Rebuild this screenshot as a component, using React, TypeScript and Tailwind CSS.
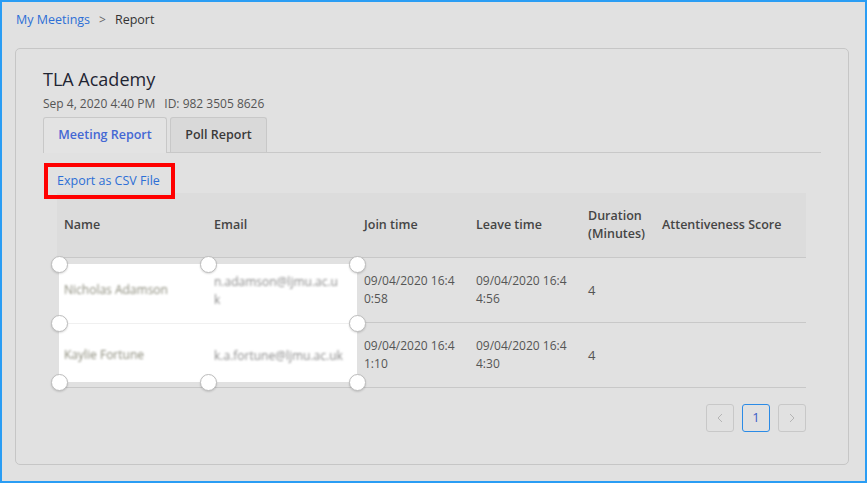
import React from "react";

const Handle = ({ className }: { className: string }) => (
  <div
    className={`absolute w-[17px] h-[17px] -ml-[8.5px] -mt-[8.5px] rounded-full bg-white border border-[#bdbdbd] shadow-[0_1px_2px_rgba(0,0,0,0.15)] ${className}`}
  />
);

const cols = "grid grid-cols-[150px_150px_112px_112px_75px_150px]";

export default function App() {
  return (
    <div
      className="w-[867px] h-[483px] border-2 border-[#2a9df4] bg-[#e1e1e1] px-[13px] overflow-hidden"
      style={{ fontFamily: '"Open Sans", "Noto Sans", sans-serif' }}
    >
      <div className="pt-[9px] pl-[1px] text-[12.5px] leading-[18px] flex items-center">
        <span className="text-[#2d6fd6]">My Meetings</span>
        <span className="text-[#666] mx-[9px] text-[12px]">&gt;</span>
        <span className="text-[#333]">Report</span>
      </div>

      <div className="mt-[19px] w-[834px] h-[417px] border border-[#c6c6c6] rounded-[5px] px-[27px] pt-[17px]">
        <div className="text-[18px] leading-[26px] text-[#1f2533]">TLA Academy</div>
        <div className="mt-[3px] text-[12px] leading-[18px] text-[#555]">
          Sep 4, 2020 4:40 PM<span className="ml-[9px]">ID: 982 3505 8626</span>
        </div>

        <div className="mt-[4px] flex items-end border-b border-[#c8c8c8] h-[36px]">
          <div className="h-[36px] w-[124px] border border-b-0 border-[#c8c8c8] rounded-t-[3px] bg-[#e3e3e3] flex items-center justify-center text-[12.5px] font-semibold text-[#4468d4] -mb-[1px] pb-[1px]">
            Meeting Report
          </div>
          <div className="ml-[3px] h-[35px] w-[97px] border border-b-0 border-[#c8c8c8] rounded-t-[3px] bg-[#d9d9d9] flex items-center justify-center text-[12.5px] font-semibold text-[#3a3a3a]">
            Poll Report
          </div>
        </div>

        <div className="mt-[10px] ml-[1px] w-[131px] h-[36px] border-[4px] border-[#ff0000] flex items-center pl-[9px] text-[12.5px] text-[#2d6fd6] relative z-10 -mb-[6px]">
          Export as CSV File
        </div>

        <div className="ml-[14px] mr-[15px] text-[12.5px]">
          <div className={`${cols} h-[65px] bg-[#dcdcdc] border-b border-[#c8c8c8] items-center font-semibold text-[#454545] leading-[18px]`}>
            <div className="pl-[7px]">Name</div>
            <div className="pl-[7px]">Email</div>
            <div className="pl-[7px]">Join time</div>
            <div className="pl-[7px]">Leave time</div>
            <div className="pl-[7px]">Duration<br />(Minutes)</div>
            <div className="pl-[6px]">Attentiveness Score</div>
          </div>

          <div className="relative text-[12px] leading-[18px] text-[#555]">
            <div className="absolute left-[2px] top-[6px] w-[298px] h-[118px] bg-white">
              <div className="absolute left-0 right-0 top-[59px] h-px bg-[#f0f0f0]" />
            </div>

            {[
              { name: "Nicholas Adamson", email: ["n.adamson@ljmu.ac.u", "k"], j: ["09/04/2020 16:4", "0:58"], l: ["09/04/2020 16:4", "4:56"], d: "4" },
              { name: "Kaylie Fortune", email: ["k.a.fortune@ljmu.ac.uk"], j: ["09/04/2020 16:4", "1:10"], l: ["09/04/2020 16:4", "4:30"], d: "4" },
            ].map((r, i) => (
              <div key={i} className={`${cols} h-[65px] border-b border-[#c8c8c8] items-center`}>
                <div className="relative pl-[7px] text-[#8a8a7a] blur-[1.2px]">{r.name}</div>
                <div className="relative pl-[7px] text-[#8a8a8a] blur-[1.2px] self-start pt-[15px]">
                  {r.email.length > 1 ? (
                    <>
                      {r.email[0]}
                      <br />
                      {r.email[1]}
                    </>
                  ) : (
                    <div className="pt-[9px]">{r.email[0]}</div>
                  )}
                </div>
                <div className="pl-[7px]">
                  {r.j[0]}
                  <br />
                  {r.j[1]}
                </div>
                <div className="pl-[7px]">
                  {r.l[0]}
                  <br />
                  {r.l[1]}
                </div>
                <div className="pl-[7px] text-[13px]">{r.d}</div>
                <div />
              </div>
            ))}

            <Handle className="left-[2px] top-[6px]" />
            <Handle className="left-[151px] top-[6px]" />
            <Handle className="left-[300px] top-[6px]" />
            <Handle className="left-[2px] top-[65px]" />
            <Handle className="left-[300px] top-[65px]" />
            <Handle className="left-[2px] top-[124px]" />
            <Handle className="left-[151px] top-[124px]" />
            <Handle className="left-[300px] top-[124px]" />
          </div>

          <div className="mt-[16px] flex justify-end gap-[8px]">
            <div className="w-[28px] h-[28px] border border-[#c8c8c8] rounded-[3px] flex items-center justify-center">
              <svg width="8" height="10" viewBox="0 0 8 10" fill="none" stroke="#b5b5b5" strokeWidth="1"><path d="M6 1 L2 5 L6 9" /></svg>
            </div>
            <div className="w-[28px] h-[28px] border border-[#2b8be6] rounded-[3px] flex items-center justify-center text-[13px] text-[#3a5ec8]">
              1
            </div>
            <div className="w-[28px] h-[28px] border border-[#c8c8c8] rounded-[3px] flex items-center justify-center">
              <svg width="8" height="10" viewBox="0 0 8 10" fill="none" stroke="#b5b5b5" strokeWidth="1"><path d="M2 1 L6 5 L2 9" /></svg>
            </div>
          </div>
        </div>
      </div>
    </div>
  );
}
